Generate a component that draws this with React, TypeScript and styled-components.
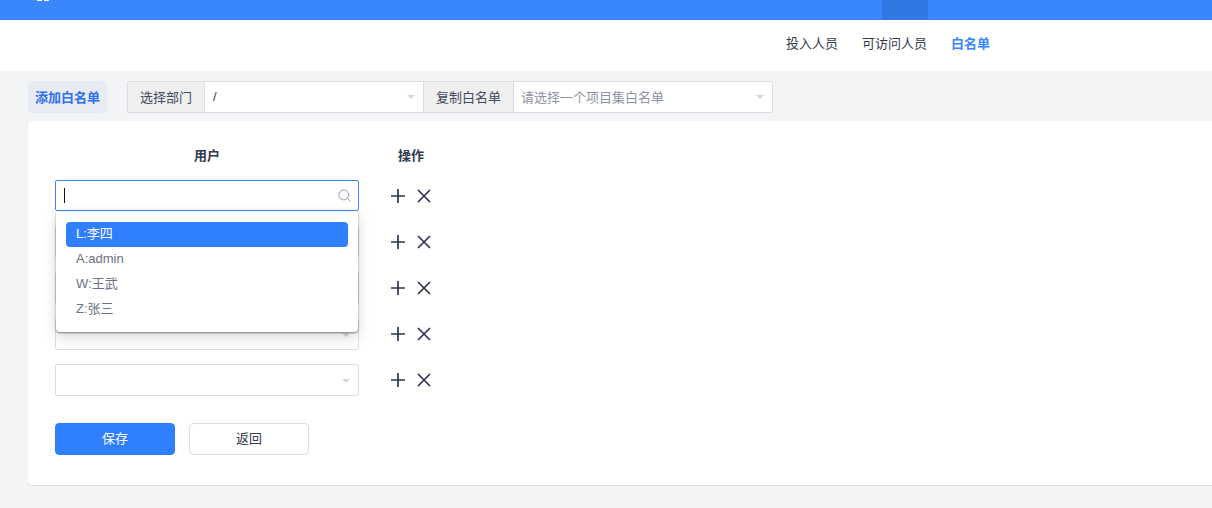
import { Search } from "lucide-react";
import styled, { createGlobalStyle } from "styled-components";

const users = ["L:李四", "A:admin", "W:王武", "Z:张三"];
const rows = [0, 1, 2, 3, 4];

const GlobalStyle = createGlobalStyle`
  html, body {
    margin: 0;
    height: 100%;
    overflow: hidden;
    background: #f3f4f6;
    color: #333a4d;
    font-family: "Liberation Sans", "Noto Sans CJK SC", sans-serif;
    font-size: 13px;
  }
`;

const Page = styled.div`
  display: flex;
  flex-direction: column;
  height: 508px;
  overflow: hidden;
`;

const TopBar = styled.header`
  display: flex;
  flex: none;
  justify-content: space-between;
  height: 20px;
  padding: 0 284px 0 37px;
  background: #3a86ff;
`;

const LogoStub = styled.span`
  display: flex;
  gap: 2px;
  height: 1px;
`;

const LogoPiece = styled.i`
  width: 5px;
  height: 1px;
  background: #ffffff;
`;

const ActiveNavItem = styled.span`
  width: 46px;
  background: #3278e4;
`;

const SubNav = styled.nav`
  display: flex;
  flex: none;
  justify-content: flex-end;
  align-items: center;
  gap: 24px;
  height: 51px;
  padding-right: 222px;
  padding-bottom: 3px;
  box-sizing: border-box;
  background: #ffffff;
`;

const SubNavLink = styled.a<{ $active?: boolean }>`
  color: ${({ $active }) => ($active ? "#3a86ff" : "#333a4d")};
  font-weight: ${({ $active }) => ($active ? 700 : 400)};
  line-height: 18px;
`;

const Content = styled.main`
  display: flex;
  flex-direction: column;
  gap: 8px;
  padding: 10px 0 0 28px;
`;

const Toolbar = styled.div`
  display: flex;
  align-items: center;
  height: 32px;
`;

const AddTag = styled.span`
  display: flex;
  align-items: center;
  justify-content: center;
  width: 79px;
  height: 32px;
  padding-bottom: 2px;
  box-sizing: border-box;
  margin-right: 20px;
  border-radius: 4px;
  color: #2f6fee;
  font-weight: 700;
  background: #e7ebf3;
`;

const InputGroup = styled.div`
  display: flex;
  width: 646px;
  height: 32px;
  box-sizing: border-box;
  overflow: hidden;
  border: 1px solid #dcdde0;
  border-radius: 2px;
  background: #ffffff;
`;

const Addon = styled.span<{ $width: number }>`
  display: flex;
  flex: none;
  align-items: center;
  justify-content: center;
  width: ${({ $width }) => $width}px;
  box-sizing: border-box;
  padding-bottom: 2px;
  border-right: 1px solid #dcdde0;
  color: #444b5c;
  background: #efefef;
`;

const GroupSelect = styled.div<{ $width: number; $muted?: boolean }>`
  display: flex;
  flex: none;
  align-items: center;
  justify-content: space-between;
  width: ${({ $width }) => $width}px;
  box-sizing: border-box;
  padding: 0 8px 2px ${({ $muted }) => ($muted ? 7 : 8)}px;
  color: ${({ $muted }) => ($muted ? "#8f93a0" : "#333a4d")};
  border-right: ${({ $muted }) => ($muted ? "none" : "1px solid #dcdde0")};
`;

const Caret = styled.span`
  flex: none;
  width: 0;
  height: 0;
  margin-top: 1px;
  border-top: 4px solid #d3d5dd;
  border-right: 4px solid transparent;
  border-left: 4px solid transparent;
`;

const Card = styled.section`
  width: 1200px;
  height: 364px;
  box-sizing: border-box;
  padding: 24px 0 0 27px;
  border-radius: 4px 0 0 4px;
  background: #ffffff;
  box-shadow: 0 1px 1px rgba(0, 0, 0, 0.1);
`;

const HeadRow = styled.div`
  display: grid;
  grid-template-columns: 304px 104px;
  height: 22px;
  margin-bottom: 13px;
  font-weight: 700;
  line-height: 22px;
  text-align: center;
`;

const FormList = styled.div`
  position: relative;
  display: flex;
  flex-direction: column;
  gap: 14px;
`;

const FormRow = styled.div`
  display: flex;
  align-items: center;
  gap: 31px;
  height: 32px;
`;

const UserSelect = styled.div<{ $focused?: boolean }>`
  display: flex;
  align-items: center;
  justify-content: space-between;
  width: 304px;
  height: ${({ $focused }) => ($focused ? 31 : 32)}px;
  align-self: flex-start;
  box-sizing: border-box;
  padding: 0 8px;
  border: 1px solid ${({ $focused }) => ($focused ? "#3a86ff" : "#dcdde0")};
  border-radius: 2px;
  background: #ffffff;
`;

const TextCursor = styled.span`
  width: 1px;
  height: 15px;
  background: #111111;
`;

const SearchIcon = styled(Search)`
  margin-right: -2px;
  color: #8e97a8;
`;

const Actions = styled.div`
  display: flex;
  gap: 10px;
  color: #2e3650;
`;

const ActionIcon = styled.svg`
  display: block;
  width: 16px;
  height: 16px;
  fill: none;
  stroke: currentColor;
  stroke-width: 1.7;
`;

const Dropdown = styled.ul`
  position: absolute;
  top: 32px;
  left: 1px;
  z-index: 2;
  width: 302px;
  height: 120px;
  box-sizing: border-box;
  margin: 0;
  padding: 10px 10px 0;
  list-style: none;
  border-radius: 0 0 4px 4px;
  background: #ffffff;
  box-shadow: 0 1px 2px rgba(0, 0, 0, 0.45), 0 5px 14px rgba(0, 0, 0, 0.16);
`;

const Option = styled.li<{ $selected?: boolean }>`
  height: 25px;
  padding-left: 10px;
  border-radius: 4px;
  color: ${({ $selected }) => ($selected ? "#ffffff" : "#6d7282")};
  line-height: 24px;
  background: ${({ $selected }) => ($selected ? "#2f7fff" : "transparent")};
`;

const Footer = styled.div`
  display: flex;
  gap: 14px;
  margin-top: 27px;
`;

const Button = styled.button<{ $primary?: boolean }>`
  width: 120px;
  height: 32px;
  padding: 0 0 3px;
  border: 1px solid ${({ $primary }) => ($primary ? "#2f7fff" : "#dcdde0")};
  border-radius: 4px;
  color: ${({ $primary }) => ($primary ? "#ffffff" : "#333a4d")};
  font: inherit;
  background: ${({ $primary }) => ($primary ? "#2f7fff" : "#ffffff")};
`;

export default function App() {
  return (
    <Page>
      <GlobalStyle />
      <TopBar>
        <LogoStub aria-hidden="true">
          <LogoPiece />
          <LogoPiece />
        </LogoStub>
        <ActiveNavItem />
      </TopBar>
      <SubNav>
        <SubNavLink>投入人员</SubNavLink>
        <SubNavLink>可访问人员</SubNavLink>
        <SubNavLink $active>白名单</SubNavLink>
      </SubNav>
      <Content>
        <Toolbar>
          <AddTag>添加白名单</AddTag>
          <InputGroup>
            <Addon $width={77}>选择部门</Addon>
            <GroupSelect $width={219}>
              /
              <Caret />
            </GroupSelect>
            <Addon $width={90}>复制白名单</Addon>
            <GroupSelect $width={258} $muted>
              请选择一个项目集白名单
              <Caret />
            </GroupSelect>
          </InputGroup>
        </Toolbar>
        <Card>
          <HeadRow>
            <span>用户</span>
            <span>操作</span>
          </HeadRow>
          <FormList>
            {rows.map((row) => (
              <FormRow key={row}>
                <UserSelect $focused={row === 0}>
                  {row === 0 ? (
                    <>
                      <TextCursor />
                      <SearchIcon size={15} strokeWidth={1.5} />
                    </>
                  ) : (
                    <>
                      <span />
                      <Caret />
                    </>
                  )}
                </UserSelect>
                <Actions>
                  <ActionIcon viewBox="0 0 16 16">
                    <path d="M8 1v14M1 8h14" />
                  </ActionIcon>
                  <ActionIcon viewBox="0 0 16 16">
                    <path d="M2 2l12 12M14 2L2 14" />
                  </ActionIcon>
                </Actions>
              </FormRow>
            ))}
            <Dropdown>
              {users.map((user, index) => (
                <Option key={user} $selected={index === 0}>
                  {user}
                </Option>
              ))}
            </Dropdown>
          </FormList>
          <Footer>
            <Button $primary>保存</Button>
            <Button>返回</Button>
          </Footer>
        </Card>
      </Content>
    </Page>
  );
}
